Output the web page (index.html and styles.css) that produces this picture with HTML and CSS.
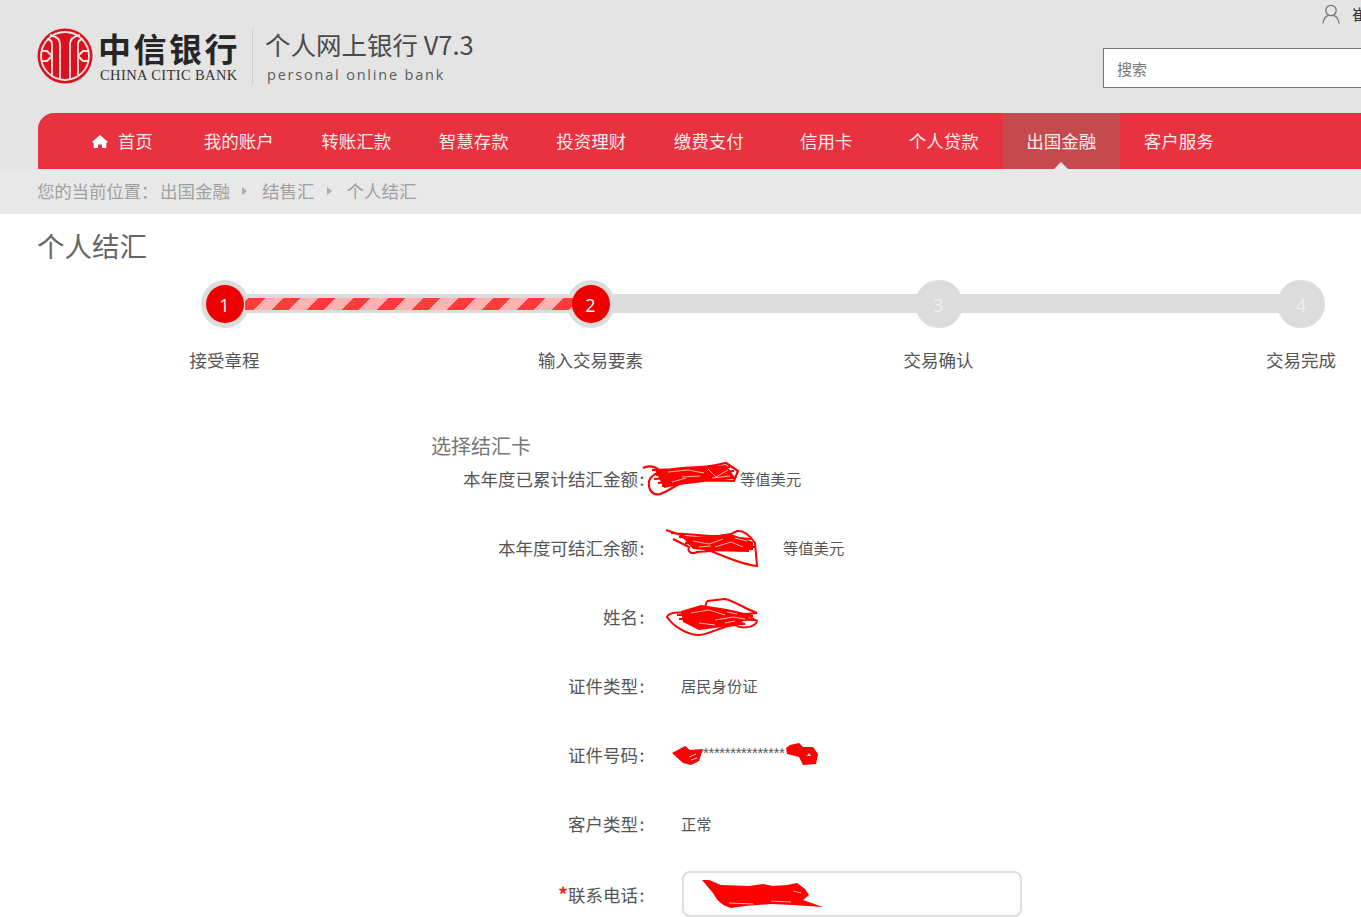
FILE: index.html
```html
<!DOCTYPE html>
<html lang="zh-CN">
<head>
<meta charset="utf-8">
<title>个人结汇</title>
<link rel="stylesheet" href="styles.css">
</head>
<body>
<div class="page">
  <header class="masthead">
    <div class="top">
      <div class="brand">
        <svg class="logo" width="56" height="56" viewBox="0 0 56 56" aria-hidden="true">
          <circle cx="28" cy="28" r="27.500" fill="#d8131f"/>
          <g fill="none" stroke="#fbe4e4" stroke-width="1.800">
            <circle cx="28" cy="28" r="24"/>
            <path d="M23 52V16Q23 9 13 7"/>
            <path d="M33 52V16Q33 9 43 7"/>
            <path d="M15 47V16Q15 12 10 11"/>
            <path d="M41 47V16Q41 12 46 11"/>
            <path d="M4 23H10L15 28L10 33H4"/>
            <path d="M52 23H46L41 28L46 33H52"/>
          </g>
        </svg>
        <div class="bank">
          <div class="bank-cn">中信银行</div>
          <div class="bank-en">CHINA CITIC BANK</div>
        </div>
        <div class="divider"></div>
        <div class="product">
          <div class="product-cn">个人网上银行 V7.3</div>
          <div class="product-en">personal online bank</div>
        </div>
      </div>
      <div class="tools">
        <div class="user">
          <svg class="user-icon" width="18" height="20" viewBox="0 0 18 20" aria-hidden="true">
            <circle cx="9" cy="6.500" r="5.200" fill="none" stroke="#777" stroke-width="1.300"/>
            <path d="M1 19.500C1.500 14.500 4.500 12 6.500 11.300M17 19.500C16.500 14.500 13.500 12 11.500 11.300" fill="none" stroke="#777" stroke-width="1.300"/>
          </svg>
          <span class="user-name">崔</span>
        </div>
        <div class="search">搜索</div>
      </div>
    </div>
    <nav class="nav">
      <a class="nav-item"><svg class="home" width="16" height="13" viewBox="0 0 16 13" aria-hidden="true"><path d="M8 0L16 7L14.300 8V13H10V9.500H6V13H1.700V8L0 7Z" fill="#fff"/></svg>首页</a>
      <a class="nav-item">我的账户</a>
      <a class="nav-item">转账汇款</a>
      <a class="nav-item">智慧存款</a>
      <a class="nav-item">投资理财</a>
      <a class="nav-item">缴费支付</a>
      <a class="nav-item">信用卡</a>
      <a class="nav-item">个人贷款</a>
      <a class="nav-item active">出国金融</a>
      <a class="nav-item">客户服务</a>
    </nav>
  </header>

  <div class="crumbs">
    <span class="crumb-lead">您的当前位置：</span><span>出国金融</span><i class="sep"></i><span>结售汇</span><i class="sep"></i><span>个人结汇</span>
  </div>

  <main class="main">
    <h1 class="title">个人结汇</h1>

    <div class="steps">
      <div class="track"><div class="progress"></div></div>
      <div class="step"><div class="dot"><div class="core">1</div></div><div class="step-label">接受章程</div></div>
      <div class="step"><div class="dot"><div class="core">2</div></div><div class="step-label">输入交易要素</div></div>
      <div class="step"><div class="dot">3</div><div class="step-label">交易确认</div></div>
      <div class="step"><div class="dot">4</div><div class="step-label">交易完成</div></div>
    </div>

    <section class="form">
      <h2 class="form-title">选择结汇卡</h2>
      <div class="row first">
        <div class="label">本年度已累计结汇金额<span class="colon">:</span></div>
        <div class="value">
          <svg class="scrib s1" width="98" height="36" viewBox="0 0 98 36" aria-hidden="true">
            <path d="M1 7C6 4 14 5 19 11C30 5 58 8 74 4L84 2L96 10L92 20L50 19C36 21 28 30 18 33C10 35 6 28 7 20C9 14 14 12 19 11M10 9L88 6L14 14L92 10L12 18L90 13L16 22L86 17L20 25L60 17" fill="none" stroke="#f00" stroke-width="2.200"/>
            <path d="M13 9L84 4L94 18L50 21L22 27Z" fill="#f00"/>
            <path d="M26 11L46 9L62 12M40 16L58 15M66 8L74 16L86 9M70 17L88 15M30 21L44 17" fill="none" stroke="#fff" stroke-width="0.700"/>
          </svg>
          <span class="txt">等值美元</span>
        </div>
      </div>
      <div class="row">
        <div class="label">本年度可结汇余额<span class="colon">:</span></div>
        <div class="value">
          <svg class="scrib s2" width="94" height="38" viewBox="0 0 94 38" aria-hidden="true">
            <path d="M1 1L30 11L66 5L72 2C80 1 86 8 90 14L92 37C80 36 60 28 46 22L32 23C26 26 22 22 24 18L8 10M6 4L86 10L14 8L88 14L20 14L90 18L28 18L84 22L40 21" fill="none" stroke="#f00" stroke-width="2"/>
            <path d="M18 9L66 5L88 13L88 21L50 22L28 20Z" fill="#f00"/>
            <path d="M28 12L44 15L58 10M50 18L66 13L78 18M34 18L46 17M70 9L82 12" fill="none" stroke="#fff" stroke-width="0.700"/>
          </svg>
          <span class="txt">等值美元</span>
        </div>
      </div>
      <div class="row">
        <div class="label">姓名<span class="colon">:</span></div>
        <div class="value">
          <svg class="scrib s3" width="94" height="38" viewBox="0 0 94 38" aria-hidden="true">
            <path d="M42 3L60 1C70 3 78 10 92 15L80 16L92 23C90 30 76 31 70 27C56 28 46 36 34 37C22 37 8 28 2 19C4 14 14 14 20 15L40 9L42 3M12 17L88 18L14 21L90 22L24 13L80 26L30 27L70 14" fill="none" stroke="#f00" stroke-width="2"/>
            <path d="M16 13L36 7L62 11L88 17L72 27L34 32L18 24Z" fill="#f00"/>
            <path d="M26 15L44 12L60 17M50 22L68 19L80 21M34 25L50 27M62 14L72 16M60 25L70 23" fill="none" stroke="#fff" stroke-width="0.700"/>
          </svg>
        </div>
      </div>
      <div class="row">
        <div class="label">证件类型<span class="colon">:</span></div>
        <div class="value"><span class="txt">居民身份证</span></div>
      </div>
      <div class="row">
        <div class="label">证件号码<span class="colon">:</span></div>
        <div class="value">
          <svg class="scrib s5a" width="33" height="22" viewBox="0 0 33 22" aria-hidden="true"><path d="M1 9L14 2L19 6L32 5L28 17L20 21L12 19Z" fill="#f00"/><path d="M18 13L25 10M20 16L26 14" fill="none" stroke="#fff" stroke-width="0.800"/></svg><span class="stars">***************</span><svg class="scrib s5b" width="33" height="24" viewBox="0 0 33 24" aria-hidden="true"><path d="M1 6L5 3L14 1L18 5L28 5L33 12L31 22L18 23L14 15L2 12Z" fill="#f00"/><path d="M22 14L24 11L26 14Z" fill="#fff"/></svg>
        </div>
      </div>
      <div class="row">
        <div class="label">客户类型<span class="colon">:</span></div>
        <div class="value"><span class="txt">正常</span></div>
      </div>
      <div class="row">
        <div class="label"><span class="req">*</span>联系电话<span class="colon">:</span></div>
        <div class="value">
          <div class="input">
            <svg class="scrib" width="122" height="30" viewBox="0 0 122 30" aria-hidden="true"><path d="M1 1L8 1L20 6L48 7L62 5L72 7L86 6L96 4L104 10L108 16L102 21L122 28L92 26L70 25L44 27L30 29C22 27 16 22 12 14Z" fill="#f00"/><path d="M28 24L52 25M70 22L90 23M92 12L100 14" fill="none" stroke="#fff" stroke-width="0.700"/></svg>
          </div>
        </div>
      </div>
    </section>
  </main>
</div>
</body>
</html>
```

FILE: styles.css
```css
html, body {
  margin: 0;
  padding: 0;
  height: 100%;
  overflow: hidden;
  background: #fff;
}
.page {
  width: 1361px;
  height: 917px;
  overflow: hidden;
  font-family: "Noto Sans CJK SC", "Noto Sans", sans-serif;
  color: #555;
}
.masthead {
  background: #e4e4e4;
  height: 169px;
  display: flex;
  flex-direction: column;
}
.top {
  height: 113px;
  display: flex;
  justify-content: space-between;
}
.brand {
  display: flex;
  align-items: flex-start;
  padding: 28px 0 0 37px;
}
.logo { flex: none; }
.bank {
  margin-left: 5px;
  width: 142px;
}
.bank-cn {
  font-size: 33px;
  line-height: 38px;
  padding-top: 1px;
  letter-spacing: 2.500px;
  font-weight: 700;
  color: #262626;
  white-space: nowrap;
}
.bank-en {
  font-family: "Liberation Serif", serif;
  font-size: 14.500px;
  line-height: 16px;
  padding-left: 2px;
  letter-spacing: 0.400px;
  color: #333;
  white-space: nowrap;
}
.divider {
  width: 1px;
  height: 55px;
  margin: 1px 12px 0 12px;
  background: #ccc;
}
.product-cn {
  font-size: 25.500px;
  line-height: 34px;
  margin-top: -1px;
  color: #4a4a4a;
  white-space: nowrap;
}
.product-en {
  font-family: "Open Sans", sans-serif;
  font-size: 14.500px;
  line-height: 24px;
  margin-top: 2px;
  padding-left: 2px;
  letter-spacing: 1.800px;
  color: #5c5c5c;
  white-space: nowrap;
}
.tools {
  width: 258px;
  flex: none;
  overflow: hidden;
  display: flex;
  flex-direction: column;
}
.user {
  display: flex;
  align-items: center;
  height: 48px;
  padding: 0 0 20px 219px;
  box-sizing: border-box;
  white-space: nowrap;
}
.user-icon { flex: none; }
.user-name {
  margin-left: 12px;
  font-size: 15px;
  line-height: 20px;
  color: #333;
}
.search {
  box-sizing: border-box;
  width: 300px;
  height: 40px;
  flex: none;
  border: 1px solid #777;
  background: #fff;
  padding-left: 13px;
  font-size: 15px;
  line-height: 39px;
  color: #777;
}
.nav {
  height: 56px;
  margin-left: 38px;
  padding-left: 24.500px;
  background: #e8323f;
  border-top-left-radius: 16px;
  display: grid;
  grid-template-columns: repeat(10, 117.500px);
}
.nav-item {
  position: relative;
  display: flex;
  align-items: center;
  justify-content: center;
  font-size: 17.500px;
  line-height: 56px;
  color: #fdeaea;
  white-space: nowrap;
}
.home { margin: 1px 10px 0 2px; }
.nav-item.active { background: #c44a4e; }
.nav-item.active::after {
  content: "";
  position: absolute;
  left: 50%;
  bottom: 0;
  margin-left: -7px;
  border: 7px solid transparent;
  border-top: 0;
  border-bottom-color: #e8e8e8;
}
.crumbs {
  box-sizing: border-box;
  height: 45px;
  padding-bottom: 1px;
  background: #e8e8e8;
  display: flex;
  align-items: center;
  padding-left: 37px;
  font-size: 17.500px;
  line-height: 44px;
  color: #a0a0a0;
  white-space: nowrap;
}
.crumb-lead { letter-spacing: -0.200px; width: 123px; }
.sep {
  width: 0;
  height: 0;
  margin: 0 15px 0 12px;
  border-left: 5px solid #aaa;
  border-top: 4px solid transparent;
  border-bottom: 4px solid transparent;
}
.main { height: 703px; }
.title {
  margin: 0;
  box-sizing: border-box;
  height: 66px;
  padding-left: 37px;
  font-size: 27.500px;
  font-weight: 400;
  line-height: 62px;
  color: #666;
}
.steps {
  position: relative;
  display: grid;
  grid-template-columns: 366px 348px 362.500px 140px;
  margin-left: 154.500px;
  height: 154px;
}
.track {
  position: absolute;
  left: 70px;
  top: 14px;
  width: 1077px;
  height: 19px;
  background: #dcdcdc;
}
.progress {
  position: absolute;
  z-index: 1;
  left: 20.500px;
  top: 4px;
  width: 328px;
  height: 12px;
  background: repeating-linear-gradient(135deg, #ffb2b2 0, #ffb2b2 2.600px, #ff3b3b 2.600px, #ff3b3b 14.300px, #ffb2b2 14.300px, #ffb2b2 24.750px);
}
.step {
  position: relative;
  width: 140px;
  display: flex;
  flex-direction: column;
  align-items: center;
}
.dot {
  box-sizing: border-box;
  width: 48px;
  height: 48px;
  border-radius: 50%;
  background: #dcdcdc;
  font-family: "Open Sans", sans-serif;
  font-size: 18px;
  line-height: 50px;
  text-align: center;
  color: #f0f0f0;
}
.core {
  position: relative;
  z-index: 2;
  width: 38px;
  height: 38px;
  margin: 5px;
  border-radius: 50%;
  background: #ee0000;
  line-height: 40px;
  color: #fff;
}
.step-label {
  margin-top: 19px;
  font-size: 17.500px;
  line-height: 26px;
  color: #555;
  white-space: nowrap;
}
.form-title {
  margin: 0;
  height: 23px;
  padding-left: 431px;
  font-size: 20px;
  font-weight: 400;
  line-height: 24px;
  color: #777;
}
.row {
  display: grid;
  grid-template-columns: 646px 1fr;
  column-gap: 35px;
  align-items: center;
  height: 44px;
  margin-top: 25px;
}
.row.first { margin-top: 0; }
.label {
  text-align: right;
  font-size: 17.500px;
  line-height: 26px;
  color: #555;
  white-space: nowrap;
}
.colon {
  display: inline-block;
  width: 8px;
  text-align: center;
}
.value {
  display: flex;
  align-items: center;
  font-size: 15.300px;
  line-height: 24px;
  color: #555;
  white-space: nowrap;
}
.txt { margin-top: -3px; }
.scrib { flex: none; }
.s1 { margin-left: -39px; }
.s2 { margin-left: -16px; margin-right: 24px; }
.s3 { margin-left: -16px; }
.s5a { margin-left: -10px; margin-right: -1px; position: relative; }
.stars {
  font-family: "Liberation Sans", sans-serif;
  font-size: 14.500px;
  letter-spacing: -0.200px;
  width: 82px;
  margin-top: -4px;
}
.s5b { position: relative; margin-top: -2px; }
.req { color: #ff2020; font-weight: 700; font-size: 19px; }
.input {
  box-sizing: border-box;
  width: 340px;
  height: 46px;
  margin-left: 1px;
  border: 2px solid #ddd;
  border-radius: 8px;
  background: #fff;
  display: flex;
  align-items: center;
  padding-left: 17px;
}
```
